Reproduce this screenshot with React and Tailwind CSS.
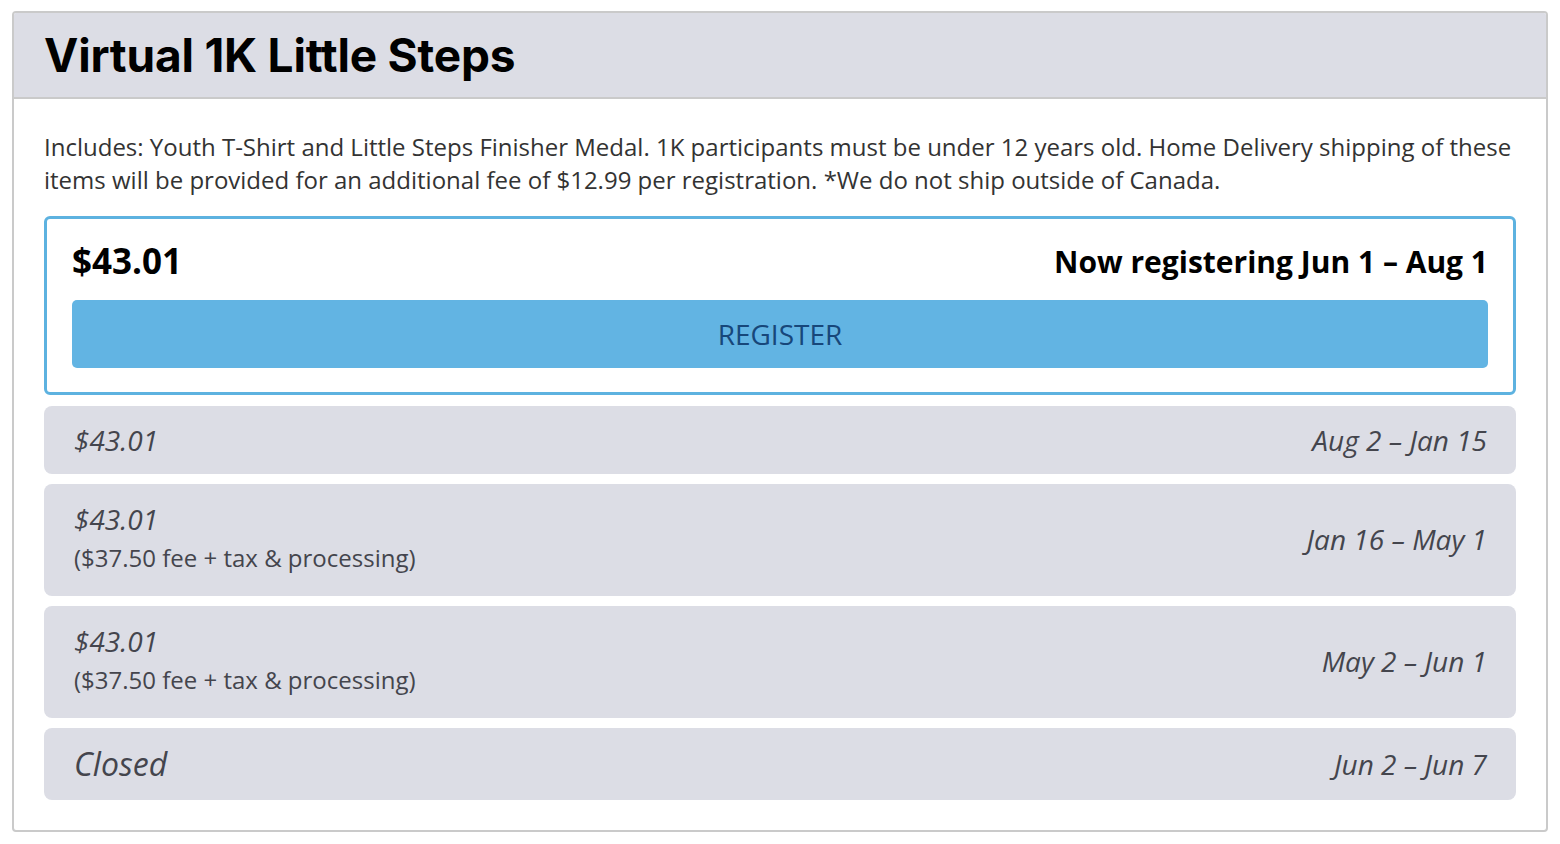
const rows = [
  { price: "$43.01", dates: "Aug 2 – Jan 15" },
  { price: "$43.01", note: "($37.50 fee + tax & processing)", dates: "Jan 16 – May 1" },
  { price: "$43.01", note: "($37.50 fee + tax & processing)", dates: "May 2 – Jun 1" },
];

function PriceRow({ price, note, dates }) {
  if (!note) {
    return (
      <div className="flex h-[68px] items-center justify-between rounded-lg bg-[#dcdde5] pl-[30px] pr-[29px] text-[28px] italic text-[#44454d]">
        <span>{price}</span>
        <span>{dates}</span>
      </div>
    );
  }
  return (
    <div className="flex items-center justify-between rounded-lg bg-[#dcdde5] pl-[30px] pr-[29px] pt-[16px] pb-[18px] text-[#44454d]">
      <div>
        <div className="text-[28px] italic leading-[38px]">{price}</div>
        <div className="text-[24px] leading-[40px]">{note}</div>
      </div>
      <span className="text-[28px] italic">{dates}</span>
    </div>
  );
}

export default function App() {
  return (
    <div className="bg-white px-[12px] pt-[11px] pb-[12px] font-['Open_Sans',sans-serif]">
      <div className="overflow-hidden rounded-[4px] border-2 border-[#cacaca]">
        <div className="flex h-[86px] items-center border-b-2 border-[#cacaca] bg-[#dcdde5] px-[30px]">
          <h1 className="font-['Inter',sans-serif] text-[46px] font-bold tracking-[-0.2px] text-black">Virtual 1K Little Steps</h1>
        </div>
        <div className="px-[30px] pt-[31px] pb-[30px]">
          <p className="text-[24px] leading-[33px] text-[#333]">
            Includes: Youth T-Shirt and Little Steps Finisher Medal. 1K participants must be under 12 years old. Home Delivery shipping of these items will be provided for an additional fee of $12.99 per registration. *We do not ship outside of Canada.
          </p>
          <div className="mt-[20px] rounded-md border-[3px] border-[#5db2e0] px-[25px] pt-[20px] pb-[24px]">
            <div className="mb-[17px] flex h-[44px] items-center justify-between font-bold text-black">
              <span className="text-[35px]">$43.01</span>
              <span className="text-[30px]">Now registering Jun 1 – Aug 1</span>
            </div>
            <button className="flex h-[68px] w-full items-center justify-center rounded-[5px] bg-[#62b4e3] text-[28px] text-[#17477a]">
              REGISTER
            </button>
          </div>
          <div className="mt-[11px] flex flex-col gap-[10px]">
            {rows.map((r, i) => (
              <PriceRow key={i} {...r} />
            ))}
            <div className="flex h-[72px] items-center justify-between rounded-lg bg-[#dcdde5] pl-[30px] pr-[29px] italic text-[#44454d]">
              <span className="text-[32px]">Closed</span>
              <span className="text-[28px]">Jun 2 – Jun 7</span>
            </div>
          </div>
        </div>
      </div>
    </div>
  );
}
